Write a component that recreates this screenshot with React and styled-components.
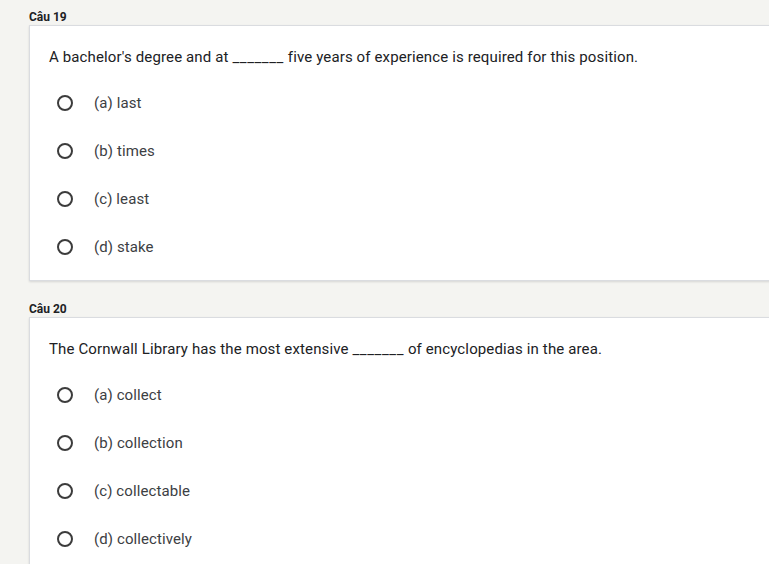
import React from 'react';
import styled, { createGlobalStyle } from 'styled-components';

const GlobalStyle = createGlobalStyle`
    html, body {
        margin:0;
        padding:0;
        background:#f4f4f1;
        overflow:hidden;
    }
    body {
        font-family:Roboto, "Liberation Sans", Arial, sans-serif;
        color:#202124;
    }
`;

const Page = styled.div`
    padding:9px 0 0 29px;
    display:flex;
    flex-direction:column;
    gap:20px;
`;

const Block = styled.section`
    display:flex;
    flex-direction:column;
`;

const Label = styled.div`
    font-size:12px;
    font-weight:700;
    line-height:16px;
    color:#202124;
`;

const Card = styled.div`
    width:780px;
    background:#fff;
    border:1px solid #dadce0;
    box-shadow:0 1px 2px rgba(0,0,0,0.12);
    padding:21px 0 9px 19px;
    box-sizing:border-box;
`;

const Question = styled.p`
    margin:0 0 12px;
    font-size:15px;
    line-height:20px;
    letter-spacing:0.13px;
    color:#202124;
`;

const Blank = styled.span`
    letter-spacing:0.6px;
`;

const OptionList = styled.ul`
    list-style:none;
    margin:0;
    padding:0 0 0 8px;
`;

const OptionRow = styled.li`
    height:48px;
    display:flex;
    align-items:center;
    gap:21px;
`;

const Radio = styled.span`
    width:16px;
    height:16px;
    border:2px solid #3c3c3c;
    border-radius:50%;
    box-sizing:border-box;
    flex-shrink:0;
`;

const OptionText = styled.span`
    font-size:15px;
    line-height:20px;
    letter-spacing:0.1px;
    color:#3c4043;
`;

const questions = [
    {
        label: 'Câu 19',
        before: "A bachelor's degree and at ",
        after: ' five years of experience is required for this position.',
        options: ['(a) last', '(b) times', '(c) least', '(d) stake'],
    },
    {
        label: 'Câu 20',
        before: 'The Cornwall Library has the most extensive ',
        after: ' of encyclopedias in the area.',
        options: ['(a) collect', '(b) collection', '(c) collectable', '(d) collectively'],
    },
];

const App = () => {
    return (
        <>
            <GlobalStyle />
            <Page>
                {questions.map(q => (
                    <Block key={q.label}>
                        <Label>{q.label}</Label>
                        <Card>
                            <Question>
                                {q.before}
                                <Blank>_______</Blank>
                                {q.after}
                            </Question>
                            <OptionList>
                                {q.options.map(opt => (
                                    <OptionRow key={opt}>
                                        <Radio />
                                        <OptionText>{opt}</OptionText>
                                    </OptionRow>
                                ))}
                            </OptionList>
                        </Card>
                    </Block>
                ))}
            </Page>
        </>
    );
};

export default App;
